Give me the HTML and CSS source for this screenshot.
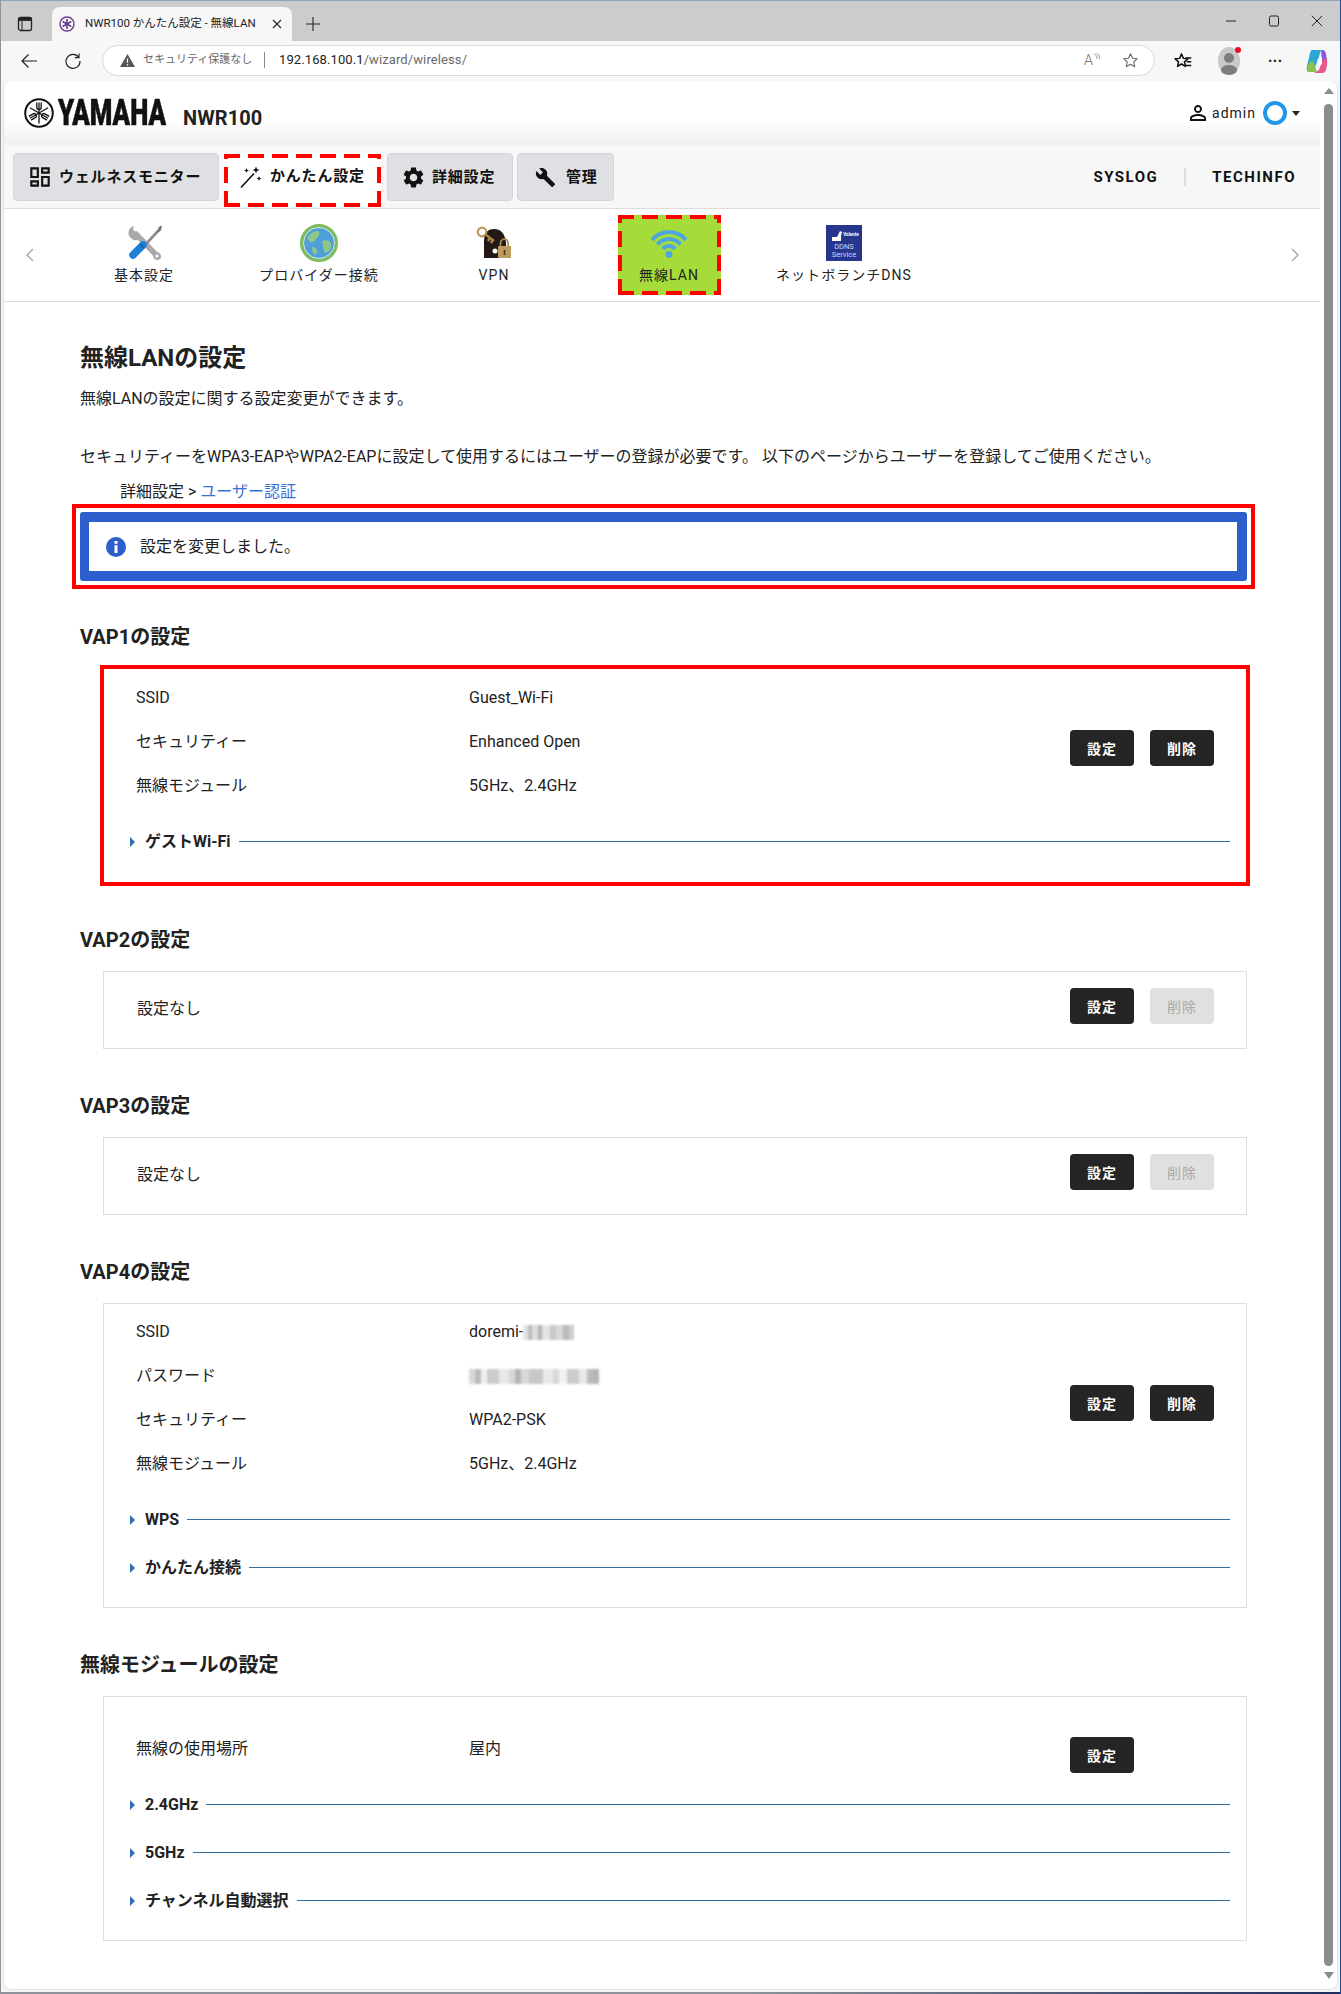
FILE: index.html
```html
<!DOCTYPE html>
<html lang="ja">
<head>
<meta charset="utf-8">
<title>NWR100 かんたん設定 - 無線LAN</title>
<link rel="stylesheet" href="styles.css">
</head>
<body>
<div class="tabbar">
  <span class="panel-ico"><svg width="16" height="16" viewBox="0 0 16 16"><rect x="1.5" y="1.5" width="13" height="13" rx="2" fill="none" stroke="#222" stroke-width="1.3"/><rect x="1.5" y="1.5" width="13" height="3.4" fill="#222"/><path d="M5 5v9" stroke="#222" stroke-width="1"/></svg></span>
  <div class="tab">
    <svg class="favicon" width="16" height="16" viewBox="0 0 16 16"><circle cx="8" cy="8" r="7" fill="none" stroke="#6a3d8f" stroke-width="1.4"/><path d="M8 3v10M3.7 5.5l8.6 5M3.7 10.5l8.6-5" stroke="#6a3d8f" stroke-width="1.6"/></svg>
    <span class="tab-title">NWR100 かんたん設定 - 無線LAN</span>
    <svg class="tab-x" width="10" height="10" viewBox="0 0 10 10"><path d="M1 1l8 8M9 1l-8 8" stroke="#222" stroke-width="1.1"/></svg>
  </div>
  <svg class="plus" width="14" height="14" viewBox="0 0 14 14"><path d="M7 0v14M0 7h14" stroke="#222" stroke-width="1.1"/></svg>
  <div class="winctl">
    <svg width="12" height="12" viewBox="0 0 12 12"><path d="M1 6h10" stroke="#222" stroke-width="1"/></svg>
    <svg width="12" height="12" viewBox="0 0 12 12"><rect x="1.5" y="1" width="9" height="10" rx="1.5" fill="none" stroke="#222" stroke-width="1"/></svg>
    <svg width="12" height="12" viewBox="0 0 12 12"><path d="M.8.8l10.4 10.4M11.2.8L.8 11.2" stroke="#222" stroke-width="1"/></svg>
  </div>
</div>

<div class="toolbar">
  <span class="tool-slot back"><svg width="18" height="16" viewBox="0 0 18 16"><path d="M17 8H2M8.5 1.5L2 8l6.5 6.5" fill="none" stroke="#222" stroke-width="1.2"/></svg></span>
  <span class="tool-slot"><svg width="18" height="18" viewBox="0 0 18 18"><path d="M14.6 5.2A7 7 0 1 0 16 9" fill="none" stroke="#222" stroke-width="1.2"/><path d="M15 1.5v4.2h-4.2" fill="none" stroke="#222" stroke-width="1.2"/></svg></span>
  <div class="address">
    <svg class="warn" width="15" height="13" viewBox="0 0 15 13"><path d="M7.5 0L15 13H0z" fill="#555"/><path d="M7.5 4.5v4.2M7.5 10v1.4" stroke="#fff" stroke-width="1.2"/></svg>
    <span class="nosec">セキュリティ保護なし</span>
    <span class="addr-sep"></span>
    <span class="url">192.168.100.1<span class="url-path">/wizard/wireless/</span></span>
    <span class="addr-right">
      <span class="read">A<svg width="7" height="10" viewBox="0 0 7 10"><path d="M1 1c3 1 3 3 3 5M3.5 0c3 1.500 3 4 3 6" fill="none" stroke="#777" stroke-width=".8"/></svg></span>
      <svg width="17" height="17" viewBox="0 0 24 24"><path d="M12 2.500l2.900 6.200 6.700.8-5 4.600 1.400 6.700-6-3.400-6 3.400 1.400-6.700-5-4.600 6.700-.8z" fill="none" stroke="#666" stroke-width="1.500" stroke-linejoin="round"/></svg>
    </span>
  </div>
  <span class="tool-slot wide first"><svg width="18" height="18" viewBox="0 0 24 24"><path d="M10 2.500l2.500 6 6 .6-4.500 4 1.300 6.200L10 16l-5.300 3.300L6 13.100l-4.500-4 6-.6z" fill="none" stroke="#111" stroke-width="2" stroke-linejoin="round"/><path d="M15 8h8M17 13h6M16 18h7" stroke="#111" stroke-width="1.800"/></svg></span>
  <span class="tool-slot wide"><span class="avatar"><svg width="24" height="28" viewBox="0 0 24 28"><ellipse cx="12" cy="14" rx="11" ry="14" fill="#c9c9c9"/><circle cx="12" cy="11" r="5" fill="#7d7d7d"/><ellipse cx="12" cy="23" rx="8" ry="5" fill="#7d7d7d"/></svg><i class="dot-red"></i></span></span>
  <span class="tool-slot wide dots">···</span>
  <span class="tool-slot copilot"><svg width="22" height="26" viewBox="0 0 22 26"><path d="M6 2h9l-3 10-5 12H3Q0 24 1 18L4 5q.5-3 2-3z" fill="#2fa6d8"/><path d="M4 14l3-1 4 11H3Q0 24 1 19z" fill="#8bc34a"/><path d="M15 2h2q2 0 3 4l1 6-5 3z" fill="#8e5bd8"/><path d="M21 10q1 6-1 12-1 3-4 3H8l5-3 3-9z" fill="#e8588f"/><path d="M11 12l5-3v7l-4 3z" fill="#fff"/></svg></span>
</div>

<div class="page">
  <div class="app">
    <header class="header">
      <svg class="ylogo" width="30" height="30" viewBox="0 0 30 30">
        <circle cx="15" cy="15" r="13.800" fill="#fff" stroke="#111" stroke-width="2"/>
        <g fill="none" stroke="#111" stroke-width="1.300">
          <g><path d="M15 15V4.500M15 15v10.500"/><path d="M12.800 4.500v5q0 2 2.200 2t2.200-2v-5"/></g>
          <g transform="rotate(60 15 15)"><path d="M15 4.500V25.500"/><path d="M12.800 25.500v-5q0-2 2.200-2t2.200 2v5"/></g>
          <g transform="rotate(120 15 15)"><path d="M15 4.500V25.500"/><path d="M12.800 4.500v5q0 2 2.200 2t2.200-2v-5"/></g>
        </g>
      </svg>
      <span class="yamaha"><span>YAMAHA</span></span>
      <span class="model">NWR100</span>
      <div class="user">
        <svg width="24" height="24" viewBox="0 0 24 24"><path d="M12 5.900c1.160 0 2.100.94 2.100 2.100s-.94 2.100-2.100 2.100S9.900 9.160 9.900 8s.94-2.100 2.100-2.100m0 9c2.970 0 6.100 1.460 6.100 2.100v1.100H5.900V17c0-.64 3.130-2.100 6.100-2.100M12 4C9.790 4 8 5.790 8 8s1.790 4 4 4 4-1.790 4-4-1.790-4-4-4zm0 9c-2.670 0-8 1.340-8 4v3h16v-3c0-2.660-5.330-4-8-4z" fill="#111"/></svg>
        <span class="uname">admin</span>
        <i class="ring"></i>
        <i class="caret"></i>
      </div>
    </header>

    <nav class="nav">
      <a class="nav-btn n1"><svg width="26" height="26" viewBox="0 0 24 24"><path d="M19 5v2h-4V5h4M9 5v6H5V5h4m10 8v6h-4v-6h4M9 17v2H5v-2h4M21 3h-8v6h8V3zM11 3H3v10h8V3zm10 8h-8v10h8V11zm-10 4H3v6h8v-6z" fill="#111"/></svg><span>ウェルネスモニター</span></a>
      <a class="nav-btn n2 dash"><svg width="24" height="24" viewBox="0 0 24 24"><path d="M2 22.500L15 8.500" stroke="#111" stroke-width="1.600" fill="none"/><path d="M17 1.500l1 2.500 2.500 1-2.500 1-1 2.500-1-2.500-2.500-1 2.500-1zM7.500 3l.7 1.800 1.800.7-1.800.7-.7 1.800-.7-1.800L5 5.500l1.800-.7zM20 11l.7 1.800 1.800.7-1.800.7-.7 1.800-.7-1.800-1.800-.7 1.800-.7z" fill="#111"/></svg><span>かんたん設定</span></a>
      <a class="nav-btn n3"><svg width="25" height="25" viewBox="0 0 24 24"><path d="M19.140 12.940c.04-.3.06-.61.06-.94 0-.32-.02-.64-.07-.94l2.030-1.580c.18-.14.23-.41.12-.61l-1.920-3.320c-.12-.22-.37-.29-.59-.22l-2.390.96c-.5-.38-1.030-.7-1.620-.94l-.36-2.540c-.04-.24-.24-.41-.48-.41h-3.840c-.24 0-.43.17-.47.41l-.36 2.540c-.59.24-1.130.57-1.620.94l-2.390-.96c-.22-.08-.47 0-.59.22L2.740 8.870c-.12.21-.08.47.12.61l2.030 1.580c-.05.3-.09.63-.09.94s.02.64.07.94l-2.030 1.580c-.18.14-.23.41-.12.61l1.920 3.320c.12.22.37.29.59.22l2.390-.96c.5.38 1.030.7 1.620.94l.36 2.540c.05.24.24.41.48.41h3.840c.24 0 .44-.17.47-.41l.36-2.540c.59-.24 1.130-.56 1.620-.94l2.390.96c.22.08.47 0 .59-.22l1.920-3.320c.12-.22.07-.47-.12-.61l-2.010-1.580zM12 15.600c-1.980 0-3.600-1.620-3.600-3.600s1.620-3.600 3.600-3.600 3.600 1.620 3.600 3.600-1.620 3.600-3.600 3.600z" fill="#111"/></svg><span>詳細設定</span></a>
      <a class="nav-btn n4"><svg width="21" height="21" viewBox="0 0 24 24"><path d="M22.700 19l-9.100-9.100c.9-2.300.4-5-1.500-6.900-2-2-5-2.400-7.400-1.300L9 6 6 9 1.600 4.700C.4 7.100.9 10.100 2.900 12.100c1.900 1.900 4.600 2.400 6.900 1.500l9.100 9.100c.4.4 1 .4 1.400 0l2.300-2.300c.5-.4.5-1.100.1-1.400z" fill="#111"/></svg><span>管理</span></a>
      <div class="nav-links">
        <a>SYSLOG</a>
        <i class="nav-sep"></i>
        <a>TECHINFO</a>
      </div>
    </nav>

    <div class="subnav">
      <span class="chev"><svg width="8" height="14" viewBox="0 0 8 14"><path d="M7 1L1 7l6 6" fill="none" stroke="#aaa" stroke-width="1.500"/></svg></span>
      <a class="sub"><span class="sub-in">
        <svg width="36" height="36" viewBox="0 0 36 36">
          <path d="M10 9l22 23" stroke="#a9a9a9" stroke-width="5.500" stroke-linecap="round"/>
          <circle cx="31" cy="31" r="3.800" fill="#a9a9a9"/><circle cx="31" cy="31" r="1.500" fill="#fff"/>
          <path d="M3 5a7.500 7.500 0 0 0 11 9l-2-6-3-.5L7 3.500 8.500 1A7 7 0 0 0 3 5z" fill="#a9a9a9"/>
          <path d="M34 2l-1 3-13 14" stroke="#8a8a8a" stroke-width="2.600" fill="none"/><path d="M35 1l-1 4-3 2" stroke="#777" stroke-width="2" fill="none"/>
          <path d="M17 20L7 30" stroke="#1f7fd4" stroke-width="7.500" stroke-linecap="round"/>
          <path d="M14 19l4 4" stroke="#0f5ea8" stroke-width="1.500"/>
        </svg>
        <span>基本設定</span></span></a>
      <a class="sub"><span class="sub-in">
        <svg width="38" height="38" class="globe" viewBox="0 0 38 38">
          <circle cx="19" cy="19" r="17.500" fill="#4f9fd8" stroke="#7fbd5c" stroke-width="3"/>
          <circle cx="19" cy="19" r="15.500" fill="none" stroke="#dcefe0" stroke-width="1"/>
          <path d="M7 14q4-7 11-7 3 3 0 6-2 1-3 4-3 2-5 1-2-2-3-4zM22 17q6-2 9 2 1 5-3 9-3 2-4-1-1-5-2-10zM12 23q4 0 5 3 0 4-2 5-3-3-3-8z" fill="#8fc78a"/>
        </svg>
        <span>プロバイダー接続</span></span></a>
      <a class="sub"><span class="sub-in">
        <svg width="36" height="36" viewBox="0 0 36 36">
          <path d="M8 33V16Q8 4 18 4t12 13v10l-4 6z" fill="#231815"/>
          <circle cx="19" cy="26" r="2.500" fill="#fff"/>
          <circle cx="6" cy="7" r="4.300" fill="none" stroke="#b89a5a" stroke-width="2.200"/>
          <path d="M9 9l9 7M14 13l-2 3M17 15l-2 3" stroke="#a78343" stroke-width="2.400" fill="none"/>
          <path d="M24.500 21v-3a3.800 3.800 0 0 1 7.600 0v3" fill="none" stroke="#a78a52" stroke-width="1.800"/>
          <rect x="22" y="21" width="13" height="12" rx="1" fill="#bd9b5e"/>
          <rect x="27.700" y="25" width="1.700" height="5" fill="#4b3a1f"/>
        </svg>
        <span>VPN</span></span></a>
      <a class="sub"><span class="sub-in on dash">
        <svg width="36" height="36" viewBox="0 0 36 36">
          <g fill="none" stroke="#4ea6e2" stroke-width="4">
            <path d="M1.100 14.900a22 22 0 0 1 33.800 0"/>
            <path d="M6.500 19.400a15 15 0 0 1 23 0"/>
            <path d="M11.900 23.900a8 8 0 0 1 12.200 0"/>
          </g>
          <circle cx="18" cy="29.500" r="3.400" fill="#4ea6e2"/>
        </svg>
        <span>無線LAN</span></span></a>
      <a class="sub"><span class="sub-in">
        <svg width="36" height="36" viewBox="0 0 36 36">
          <rect width="36" height="36" fill="#26368f"/>
          <path d="M6 12h5l3-6 2 1-1 4v5H6z" fill="#fff"/>
          <text x="25" y="11" class="dd-small">Volante</text>
          <text x="18" y="24" class="dd-big">DDNS</text>
          <text x="18" y="32" class="dd-big">Service</text>
        </svg>
        <span>ネットボランチDNS</span></span></a>
      <span class="subspace"></span>
      <span class="chev next"><svg width="8" height="14" viewBox="0 0 8 14"><path d="M1 1l6 6-6 6" fill="none" stroke="#aaa" stroke-width="1.500"/></svg></span>
    </div>

    <main class="content">
      <h1>無線LANの設定</h1>
      <p class="p1">無線LANの設定に関する設定変更ができます。</p>
      <p class="p2">セキュリティーをWPA3-EAPやWPA2-EAPに設定して使用するにはユーザーの登録が必要です。 以下のページからユーザーを登録してご使用ください。</p>
      <p class="p3">詳細設定 &gt; <a class="link">ユーザー認証</a></p>

      <div class="alert-mark">
        <div class="alert">
          <svg width="20" height="20" viewBox="0 0 20 20"><circle cx="10" cy="10" r="10" fill="#2d5fcc"/><rect x="8.500" y="4" width="3" height="2.800" fill="#fff"/><rect x="8.500" y="8.200" width="3" height="7.800" fill="#fff"/></svg>
          <span>設定を変更しました。</span>
        </div>
      </div>

      <section class="sec">
        <h2>VAP1の設定</h2>
        <div class="box marked">
          <div class="top">
            <div class="rows">
              <div class="row"><span class="k">SSID</span><span>Guest_Wi-Fi</span></div>
              <div class="row"><span class="k">セキュリティー</span><span>Enhanced Open</span></div>
              <div class="row"><span class="k">無線モジュール</span><span>5GHz、2.4GHz</span></div>
            </div>
            <div class="btns b3"><a class="btn">設定</a><a class="btn">削除</a></div>
          </div>
          <div class="fold"><i class="tri"></i><b>ゲストWi-Fi</b><i class="rule"></i></div>
        </div>
      </section>

      <section class="sec">
        <h2>VAP2の設定</h2>
        <div class="box empty">
          <div class="top">
            <div class="rows"><div class="row none">設定なし</div></div>
            <div class="btns b1"><a class="btn">設定</a><a class="btn off">削除</a></div>
          </div>
        </div>
      </section>

      <section class="sec">
        <h2>VAP3の設定</h2>
        <div class="box empty">
          <div class="top">
            <div class="rows"><div class="row none">設定なし</div></div>
            <div class="btns b1"><a class="btn">設定</a><a class="btn off">削除</a></div>
          </div>
        </div>
      </section>

      <section class="sec">
        <h2>VAP4の設定</h2>
        <div class="box">
          <div class="top">
            <div class="rows">
              <div class="row"><span class="k">SSID</span><span class="val">doremi-<i class="mosaic m1"></i></span></div>
              <div class="row"><span class="k">パスワード</span><span class="val"><i class="mosaic m2"></i></span></div>
              <div class="row"><span class="k">セキュリティー</span><span>WPA2-PSK</span></div>
              <div class="row"><span class="k">無線モジュール</span><span>5GHz、2.4GHz</span></div>
            </div>
            <div class="btns b4"><a class="btn">設定</a><a class="btn">削除</a></div>
          </div>
          <div class="fold"><i class="tri"></i><b>WPS</b><i class="rule"></i></div>
          <div class="fold"><i class="tri"></i><b>かんたん接続</b><i class="rule"></i></div>
        </div>
      </section>

      <section class="sec">
        <h2>無線モジュールの設定</h2>
        <div class="box mod">
          <div class="top">
            <div class="rows">
              <div class="row"><span class="k">無線の使用場所</span><span>屋内</span></div>
            </div>
            <div class="btns b5"><a class="btn">設定</a><span class="btn-gap"></span></div>
          </div>
          <div class="fold"><i class="tri"></i><b>2.4GHz</b><i class="rule"></i></div>
          <div class="fold"><i class="tri"></i><b>5GHz</b><i class="rule"></i></div>
          <div class="fold"><i class="tri"></i><b>チャンネル自動選択</b><i class="rule"></i></div>
        </div>
      </section>
    </main>
  </div>
  <div class="scroll">
    <i class="sc-up"></i>
    <i class="sc-thumb"></i>
    <i class="sc-down"></i>
  </div>
</div>
<div class="winedge"></div>
</body>
</html>
```

FILE: styles.css
```css
* { box-sizing: border-box; }
html, body { margin: 0; padding: 0; }
body {
  position: relative;
  width: 1341px;
  height: 1994px;
  overflow: hidden;
  background: #f4f4f4;
  color: #222;
  font-family: Roboto, "Noto Sans CJK JP", sans-serif;
  font-size: 16px;
  line-height: 1.5;
}
body::after {
  content: "";
  position: absolute;
  inset: 0;
  box-shadow: inset 1px 0 #8e9499, inset -1px 0 #24469e;
  pointer-events: none;
}
a { color: inherit; text-decoration: none; }
i { font-style: normal; display: block; }
svg { display: block; flex: none; }

/* browser chrome */
.tabbar {
  height: 41px;
  background: #cccccc;
  border-top: 1px solid #8fa5b5;
  display: flex;
  align-items: flex-end;
}
.panel-ico { width: 52px; height: 34px; display: flex; align-items: center; justify-content: center; padding: 0 2px 0 0; }
.tab {
  width: 240px;
  height: 34px;
  background: #f7f7f7;
  border-radius: 8px 8px 0 0;
  display: flex;
  align-items: center;
  padding-left: 7px;
  font-size: 11.500px;
  color: #222;
}
.tab-title { margin-left: 10px; width: 187px; white-space: nowrap; }
.tab-x { margin-left: 0; }
.plus { margin: 0 0 10px 14px; }
.winctl { margin-left: auto; width: 116px; height: 40px; padding-right: 18px; display: flex; align-items: center; justify-content: space-between; }

.toolbar {
  height: 40px;
  background: #f7f7f7;
  display: flex;
  align-items: center;
  padding-left: 9px;
}
.tool-slot { width: 40px; height: 30px; display: flex; align-items: center; justify-content: center; }
.tool-slot.back { margin-right: 4px; }
.address {
  width: 1053px;
  height: 31px;
  margin-left: 9px;
  margin-top: -2px;
  background: #fff;
  border: 1px solid #d9d9d9;
  border-radius: 16px;
  display: flex;
  align-items: center;
  padding-left: 17px;
}
.nosec { margin-left: 8px; font-size: 11px; color: #666; width: 110px; white-space: nowrap; }
.addr-sep { width: 1px; height: 16px; background: #888; margin-left: 11px; }
.url { margin-left: 14px; font-size: 13px; letter-spacing: .1px; color: #222; }
.url-path { color: #6a6a6a; }
.addr-right { margin-left: auto; display: flex; align-items: center; gap: 22px; padding-right: 15px; }
.read { font-size: 15px; color: #777; display: flex; align-items: flex-start; line-height: 1; font-weight: 300; }
.tool-slot.wide { width: 46px; }
.tool-slot.first { margin-left: 5px; }
.dots { font-size: 16px; font-weight: 700; color: #222; }
.copilot { width: 38px; }
.avatar { position: relative; display: block; }
.dot-red { position: absolute; top: 0; right: 0; width: 6px; height: 6px; border-radius: 50%; background: #e81123; }

/* page */
.page {
  height: 1909px;
  width: 1335px;
  margin-left: 3px;
  background: #fff;
  border: 1px solid #e2e2e2;
  border-top: 0;
  border-radius: 8px;
  display: flex;
  overflow: hidden;
}
.winedge { height: 2px; margin-top: 2px; background: linear-gradient(90deg, #8e9499 0, #8e9499 55%, #1d2c5c 100%); }
.app { width: 1316px; }
.header {
  height: 64px;
  background: linear-gradient(#fff 0, #fff 60%, #f0f0f0 100%);
  display: flex;
  align-items: center;
  padding-left: 20px;
}
.yamaha {
  width: 108px;
  margin-left: 4px;
  display: block;
  font-size: 36px;
  font-weight: 900;
  line-height: 1;
  color: #111;
  white-space: nowrap;
  -webkit-text-stroke: .6px #111;
}
.yamaha span { display: inline-block; transform: scaleX(.715); transform-origin: left center; }
.model { margin: 10px 0 0 17px; font-size: 20px; font-weight: 700; color: #222; letter-spacing: .1px; line-height: 1; }
.user { margin-left: auto; padding-right: 20px; display: flex; align-items: center; }
.uname { font-size: 14px; letter-spacing: 1px; margin: 0 7px 0 2px; color: #222; }
.ring { width: 24px; height: 24px; border-radius: 50%; border: 4px solid #2196e8; }
.caret { margin-left: 5px; width: 0; height: 0; border: 4px solid transparent; border-top: 5px solid #222; border-bottom: 0; }

.nav {
  height: 64px;
  background: #f7f7f7;
  border-bottom: 1px solid #ddd;
  display: flex;
  align-items: flex-start;
  padding: 8px 0 0 9px;
}
.nav-btn {
  height: 48px;
  background: #dfe0e3;
  border: 1px solid #d4d5d8;
  border-radius: 4px;
  display: flex;
  align-items: center;
  font-size: 15px;
  font-weight: 700;
  letter-spacing: .8px;
  color: #111;
}
.n1 { width: 206px; padding-left: 13px; gap: 6px; margin-right: 5px; }
.n2 { width: 157px; height: 53px; margin: 1px 6px 0 0; padding: 0 0 8px 15px; gap: 7px; background-color: #fff; border: 0; border-radius: 0; }
.n3 { width: 126px; padding-left: 13px; gap: 6px; margin-right: 4px; }
.n4 { width: 97px; padding-left: 17px; gap: 10px; }
.dash {
  background-image:
    repeating-linear-gradient(90deg, #f00 0 16px, transparent 16px 24px),
    repeating-linear-gradient(90deg, #f00 0 16px, transparent 16px 24px),
    repeating-linear-gradient(0deg, #f00 0 16px, transparent 16px 24px),
    repeating-linear-gradient(0deg, #f00 0 16px, transparent 16px 24px);
  background-size: 100% 4px, 100% 4px, 4px 100%, 4px 100%;
  background-position: 0 0, 0 100%, 0 0, 100% 0;
  background-repeat: no-repeat;
}
.nav-links { margin-left: auto; padding-right: 24px; display: flex; align-items: center; font-size: 15px; font-weight: 700; letter-spacing: 1.500px; color: #111; height: 48px; }
.nav-sep { width: 2px; height: 18px; background: #ddd; margin: 0 26px; }

.subnav {
  height: 93px;
  border-bottom: 1px solid #ddd;
  display: flex;
  align-items: flex-start;
}
.chev { width: 52.500px; height: 92px; display: flex; align-items: center; justify-content: center; }
.chev.next { width: 50px; }
.sub { width: 175px; display: flex; justify-content: center; padding-top: 6px; }
.subspace { flex: 1; }
.sub-in {
  width: 103px;
  height: 80px;
  padding-top: 10px;
  display: flex;
  flex-direction: column;
  align-items: center;
  font-size: 14px;
  letter-spacing: 1.050px;
  line-height: 20px;
  white-space: nowrap;
  color: #222;
  gap: 4px;
}
.sub-in .globe { margin: -1px 0 -1px; }
.sub-in.on { background-color: #a6dc3a; }
.dd-small { font: 700 4.500px Roboto, sans-serif; fill: #fff; text-anchor: middle; letter-spacing: 0; }
.dd-big { font: 400 7.500px Roboto, sans-serif; fill: #cfd6f2; text-anchor: middle; letter-spacing: 0; }

/* content */
.content { padding: 39px 73px 0 76px; }
h1 { margin: 0; height: 32px; font-size: 24px; font-weight: 700; line-height: 34px; color: #222; }
.content p { height: 24px; line-height: 26px; }
.content .p1 { margin: 13px 0 0; }
.content .p2 { margin: 34px 0 0; white-space: nowrap; }
.content .p3 { margin: 11px 0 0 40px; }
.link { color: #3a6fd8; }
.alert-mark {
  margin: 1px -8px 0;
  padding: 4px;
  border: 4px solid #f00;
}
.alert {
  height: 69px;
  border: 10px solid #2d5fcc;
  border-left-width: 9px;
  border-radius: 3px;
  display: flex;
  align-items: center;
  padding-left: 17px;
  gap: 14px;
}
.sec { margin-top: 42px; }
.alert-mark + .sec { margin-top: 33px; }
h2 { margin: 0 0 18px; height: 28px; font-size: 20px; font-weight: 700; line-height: 30px; color: #222; }
.box {
  margin-left: 23px;
  border: 1px solid #ddd;
  padding: 5px 16px 16px 26px;
}
.box.marked { outline: 4px solid #f00; outline-offset: -1px; padding-top: 6px; padding-bottom: 17px; }
.box.empty { padding-top: 14px; padding-bottom: 18px; }
.box.mod { padding-top: 29px; }
.top { display: flex; align-items: flex-start; justify-content: space-between; padding: 0 16px 0 6px; }
.mod .top { height: 44px; }
.row { height: 44px; padding-top: 2px; display: flex; align-items: center; }
.row.none { padding-left: 1px; }
.k { width: 333px; }
.val { display: flex; align-items: center; }
.btns { display: flex; gap: 16px; }
.b1 { margin-top: 2px; }
.b3 { margin-top: 55px; }
.b4 { margin-top: 76px; }
.b5 { margin-top: 11px; }
.btn {
  width: 64px;
  height: 36px;
  padding-top: 2px;
  background: #252525;
  color: #fff;
  border-radius: 4px;
  font-size: 14px;
  font-weight: 700;
  letter-spacing: 1px;
  display: flex;
  align-items: center;
  justify-content: center;
}
.btn.off { background: #e0e0e0; color: #aaa; font-weight: 400; }
.btn-gap { width: 64px; }
.fold { height: 48px; padding-top: 1px; display: flex; align-items: center; font-size: 16px; color: #222; }
.top + .fold { margin-top: 10px; }
.fold b { font-weight: 700; margin-left: 10px; white-space: nowrap; }
.tri { width: 0; height: 0; border: 5px solid transparent; border-left: 5px solid #2f6eb0; border-right: 0; }
.rule { flex: 1; height: 1px; background: #33709f; margin-left: 8px; }
.mosaic { height: 15px; filter: blur(1.2px); }
.m1 { width: 51px; background: linear-gradient(90deg, #e4e4e4 0 5px, #bbb 5px 9px, #ddd 9px 15px, #b4b4b4 15px 19px, #e4e4e4 19px 27px, #c8c8c8 27px 33px, #d8d8d8 33px 40px, #bbb 40px 46px, #ccc 46px 51px); }
.m2 { width: 130px; background: linear-gradient(90deg, #d8d8d8 0 6px, #bbb 6px 12px, #eee 12px 18px, #ccc 18px 30px, #e8e8e8 30px 40px, #d8d8d8 40px 46px, #b4b4b4 46px 52px, #d8d8d8 52px 60px, #c8c8c8 60px 74px, #e8e8e8 74px 84px, #d8d8d8 84px 90px, #f2f2f2 90px 98px, #ccc 98px 110px, #e8e8e8 110px 118px, #bbb 118px 124px, #b4b4b4 124px 130px); }

/* scrollbar */
.scroll { width: 17px; padding-top: 7px; display: flex; flex-direction: column; align-items: center; }
.sc-up { width: 0; height: 0; border: 5px solid transparent; border-bottom: 6px solid #8c8c8c; border-top: 0; }
.sc-thumb { width: 9px; height: 1862px; margin-top: 10px; background: #8c8c8c; border-radius: 4.500px; }
.sc-down { width: 0; height: 0; margin-top: 6px; border: 5.500px solid transparent; border-top: 7px solid #8c8c8c; border-bottom: 0; }
```
